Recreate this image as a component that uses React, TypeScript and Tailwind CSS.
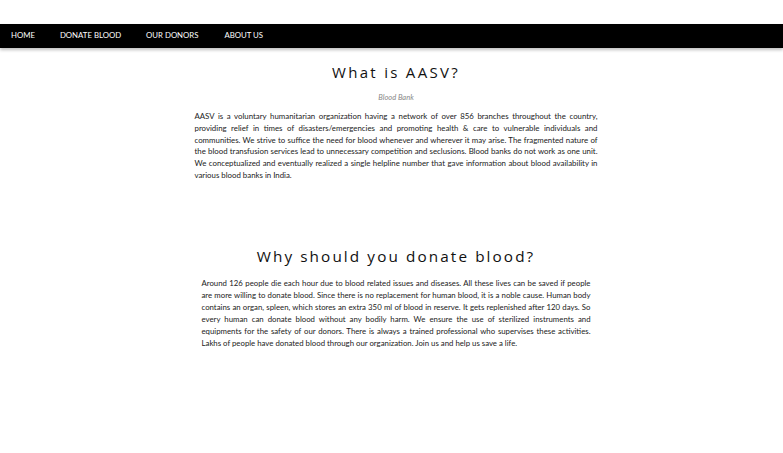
import React from "react";

export default function App() {
  const body = { fontFamily: "Lato, 'Noto Sans', sans-serif" };
  const head = { fontFamily: "'Open Sans', 'Noto Sans', sans-serif" };
  return (
    <div className="w-[783px] h-[453px] bg-white overflow-hidden" style={body}>
      <div className="h-[24px]" />
      <nav className="h-[24px] bg-black flex items-center shadow-[0_2px_3px_rgba(0,0,0,0.25)] text-white text-[7.8px]">
        <a className="ml-[11px]">HOME</a>
        <a className="ml-[25px]">DONATE BLOOD</a>
        <a className="ml-[25px]">OUR DONORS</a>
        <a className="ml-[26px]">ABOUT US</a>
      </nav>
      <div className="pl-[9px] flex flex-col items-center">
        <h1 className="mt-[13px] text-[15px] leading-[22px] tracking-[2.3px] text-[#111]" style={head}>
          What is AASV?
        </h1>
        <p className="mt-[10px] text-[7.5px] italic text-[#888] leading-[10px]">Blood Bank</p>
        <p className="mt-[8px] w-[403px] text-[7.85px] leading-[11.8px] text-justify text-[#222]">
          AASV is a voluntary humanitarian organization having a network of over 856 branches throughout the country, providing relief in times of disasters/emergencies and promoting health &amp; care to vulnerable individuals and communities. We strive to suffice the need for blood whenever and wherever it may arise. The fragmented nature of the blood transfusion services lead to unnecessary competition and seclusions. Blood banks do not work as one unit. We conceptualized and eventually realized a single helpline number that gave information about blood availability in various blood banks in India.
        </p>
        <h2 className="mt-[62px] text-[15.3px] leading-[24px] tracking-[2.1px] text-[#111]" style={head}>
          Why should you donate blood?
        </h2>
        <p className="mt-[9px] w-[389px] text-[7.8px] leading-[12px] text-justify text-[#222]">
          Around 126 people die each hour due to blood related issues and diseases. All these lives can be saved if people are more willing to donate blood. Since there is no replacement for human blood, it is a noble cause. Human body contains an organ, spleen, which stores an extra 350 ml of blood in reserve. It gets replenished after 120 days. So every human can donate blood without any bodily harm. We ensure the use of sterilized instruments and equipments for the safety of our donors. There is always a trained professional who supervises these activities. Lakhs of people have donated blood through our organization. Join us and help us save a life.
        </p>
      </div>
    </div>
  );
}
